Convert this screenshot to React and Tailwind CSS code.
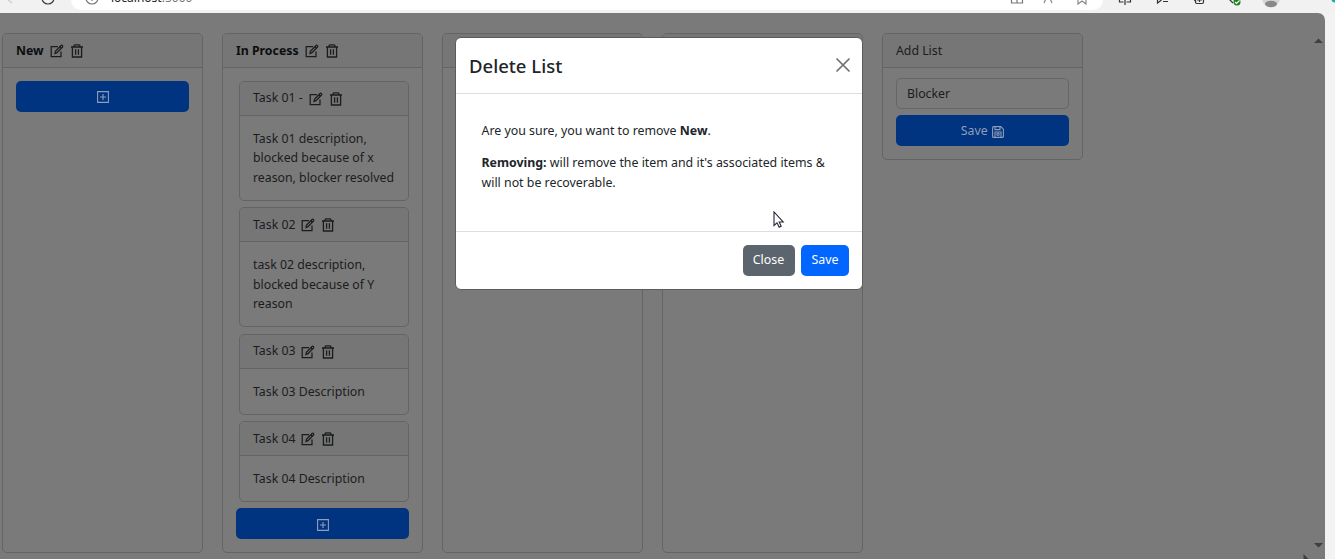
import React from "react";

function EditIcon() {
  return (
    <svg className="ml-[6px] size-[14px] shrink-0" viewBox="0 0 14 14" fill="none" stroke="currentColor" strokeWidth="1.25">
      <path d="M8 2.600H1.200v10h9.800V7.500" />
      <path d="M5 9.500l.4-2.300L11 1.500q.7-.6 1.400 0l.1.1q.6.700 0 1.400L7 8.700zM9.900 2.700l1.500 1.500" />
    </svg>
  );
}

function TrashIcon() {
  return (
    <svg className="ml-[6px] size-[14px] shrink-0" viewBox="0 0 14 14" fill="none" stroke="currentColor" strokeWidth="1.300">
      <path d="M1 3h12M4 3V1.900q0-1.100 1.100-1.100h3.800q1.100 0 1.100 1.100V3M2.400 3v10h9.200V3" />
      <path d="M5.600 5.200v5.600M8.400 5.200v5.600" />
    </svg>
  );
}

function PlusSquareIcon() {
  return (
    <svg className="size-[12px]" viewBox="0 0 12 12" fill="none" stroke="currentColor" strokeWidth="1.100">
      <path d="M.6.6h10.800v10.800H.6zM6 3v6M3 6h6" />
    </svg>
  );
}

function SaveIcon() {
  return (
    <svg className="size-[12px]" viewBox="0 0 12 12" fill="none" stroke="currentColor" strokeWidth="1.100">
      <path d="M1.600.6h7.200l2.600 2.600v7.200q0 1-1 1H1.600q-1 0-1-1V1.600q0-1 1-1z" />
      <path d="M3 .6v3h5v-3M3 11.400V6h6v5.400" />
      <circle cx="6" cy="8.200" r="1.200" />
    </svg>
  );
}

function ItemIcons() {
  return (
    <>
      <EditIcon />
      <TrashIcon />
    </>
  );
}

function AddButton() {
  return (
    <button className="flex h-[31px] w-full items-center justify-center rounded-[5px] bg-[#003380] pt-[2px] pl-px text-[#8f9db8]">
      <PlusSquareIcon />
    </button>
  );
}

function Column({ title, bold = true, icons = true, className = "h-[520px]", children }) {
  return (
    <section className={`w-[200.500px] shrink-0 rounded-[5px] border border-[#646464] ${className}`}>
      <header className="flex h-[34px] items-center rounded-t-[4px] border-b border-[#646464] bg-[#767676] px-[13px] pt-px">
        <span className={bold ? "font-bold text-[12.300px] text-[#0c0d0e]" : "pt-px"}>{title}</span>
        {icons && <ItemIcons />}
      </header>
      <div className="px-[13px] pt-[12.500px]">{children}</div>
    </section>
  );
}

function Task({ title, lines }) {
  return (
    <article className="mb-[6.500px] ml-[3px] rounded-[5px] border border-[#646464]">
      <header className="flex h-[34px] items-center rounded-t-[4px] border-b border-[#646464] bg-[#767676] px-[13px] pt-px">
        <span>{title}</span>
        <ItemIcons />
      </header>
      <div className="px-[13px] pb-[12.300px] pt-[13px] leading-[19.600px]">
        {lines.map((line) => (
          <p key={line} className="whitespace-nowrap">{line}</p>
        ))}
      </div>
    </article>
  );
}

const tasks = [
  { title: "Task 01 -", lines: ["Task 01 description,", "blocked because of x", "reason, blocker resolved"] },
  { title: "Task 02", lines: ["task 02 description,", "blocked because of Y", "reason"] },
  { title: "Task 03", lines: ["Task 03 Description"] },
  { title: "Task 04", lines: ["Task 04 Description"] },
];

function BrowserBar() {
  return (
    <div className="relative h-[13px] overflow-hidden bg-[#f1f1f1]">
      <div className="ml-[71px] h-[10px] w-[1032px] rounded-b-[10px] bg-white" />
      <span className="absolute left-[111px] top-[-10px] text-[12px] leading-[16px] text-[#222]">
        localhost<span className="text-[#777]">:5000</span>
      </span>
      <svg className="absolute left-0 top-0" width="1335" height="13" fill="none" stroke="#333" strokeWidth="1.200">
        <path d="M7 -1l5 4" stroke="#ccc" />
        <circle cx="48" cy="-2" r="6" />
        <circle cx="92" cy="-2" r="6" stroke="#777" />
        <path d="M92 -2v3" stroke="#777" />
        <path d="M1011.500 -2v5h11v-5M1017 -2v5" stroke="#777" />
        <path d="M1044 3l4-9l4 9" stroke="#888" />
        <path d="M1078 -5v9l4-3l4 3v-9" stroke="#888" />
        <path d="M1119.500 -2v4h4M1130.500 -2v4h-4M1125 -3v8" />
        <path d="M1157.500 -2v5l4-3M1163 1.500h5" />
        <path d="M1193 -2l3 4M1195.500 -6v8q0 1.500 1.500 1.500h5q1.500 0 1.500-1.500v-8M1199.500 -4v6M1197 0h5" />
        <path d="M1229 -1l4 4" />
        <circle cx="1237" cy="2" r="3.500" fill="#16821c" stroke="none" />
        <path d="M1235 2l1.500 1.500l3-3" stroke="#fff" />
        <circle cx="1271" cy="-2" r="9" fill="#d5d5d5" stroke="none" />
        <ellipse cx="1271" cy="4" rx="6" ry="3.300" fill="#888" stroke="none" />
        <circle cx="1335" cy="-1" r="3.500" fill="#18aeb0" stroke="none" />
      </svg>
    </div>
  );
}

function Modal() {
  return (
    <div
      role="dialog"
      className="absolute left-[455px] top-[37px] flex h-[252.500px] w-[407.500px] flex-col rounded-[6px] border border-[#5c5c5c] bg-white text-[12.370px] text-[#212529]"
    >
      <header className="flex h-[56px] shrink-0 items-center justify-between border-b border-[#dcdfe2] px-[13px]">
        <h1 className="text-[18.500px] font-medium">Delete List</h1>
        <svg className="mr-[-1px] mt-[-1px]" width="14" height="14" viewBox="0 0 14 14" fill="none" stroke="#707070" strokeWidth="1.700" strokeLinecap="round">
          <path d="M1 1l12 12M13 1L1 13" />
        </svg>
      </header>
      <div className="grow px-[25.500px] pt-[26.500px] leading-[19.600px]">
        <p className="mb-[13px]">
          Are you sure, you want to remove <b>New</b>.
        </p>
        <p className="whitespace-nowrap"><b>Removing:</b> will remove the item and it's associated items &amp;</p>
        <p>will not be recoverable.</p>
      </div>
      <footer className="flex h-[58px] shrink-0 items-center justify-end gap-[6.500px] border-t border-[#dcdfe2] pr-[12.500px] text-white">
        <button className="h-[31px] w-[52px] rounded-[5px] bg-[#5c656d] pt-px">Close</button>
        <button className="h-[31px] w-[48px] rounded-[5px] bg-[#0166ff] pt-px">Save</button>
      </footer>
    </div>
  );
}

export default function App() {
  return (
    <div className="relative flex h-[559px] w-[1335px] flex-col overflow-hidden bg-[#f3f3f3] font-['Noto_Sans','Open_Sans',sans-serif] text-[12.300px] text-[#1a1c1e]">
      <BrowserBar />
      <main className="relative flex w-[1325px] grow items-start gap-[19.500px] rounded-tr-[7px] bg-[#7a7a7a] pl-[2px] pt-[20px]">
        <Column title="New">
          <AddButton />
        </Column>
        <Column title="In Process">
          {tasks.map((t) => (
            <Task key={t.title} {...t} />
          ))}
          <AddButton />
        </Column>
        <Column title="" icons={false} />
        <Column title="" icons={false} />
        <Column title="Add List" bold={false} icons={false} className="h-[127px]">
          <div className="-mt-[3px] flex h-[31px] items-center rounded-[5px] border border-[#656667] px-[10px] pt-[2px]">Blocker</div>
          <button className="mt-[6.500px] flex h-[31px] w-full items-center justify-center gap-[4px] rounded-[5px] bg-[#003380] pt-[2px] text-[#8f9db8]">
            Save <SaveIcon />
          </button>
        </Column>
        <svg className="absolute right-0 top-0" width="30" height="546" fill="#3f3f3f">
          <path d="M19 30l4.500-4.500l4.500 4.500zM19 530l4.500 4.500l4.500-4.500zM8.500 541v5h5z" />
        </svg>
      </main>
      <Modal />
      <svg className="absolute left-[773px] top-[211px]" width="12" height="18" viewBox="0 0 12 18" fill="#fff" stroke="#222433" strokeWidth="1.100">
        <path d="M1 1v13.500l3-2.700l2.200 4.400l2-1l-2-4.200h4z" />
      </svg>
    </div>
  );
}
